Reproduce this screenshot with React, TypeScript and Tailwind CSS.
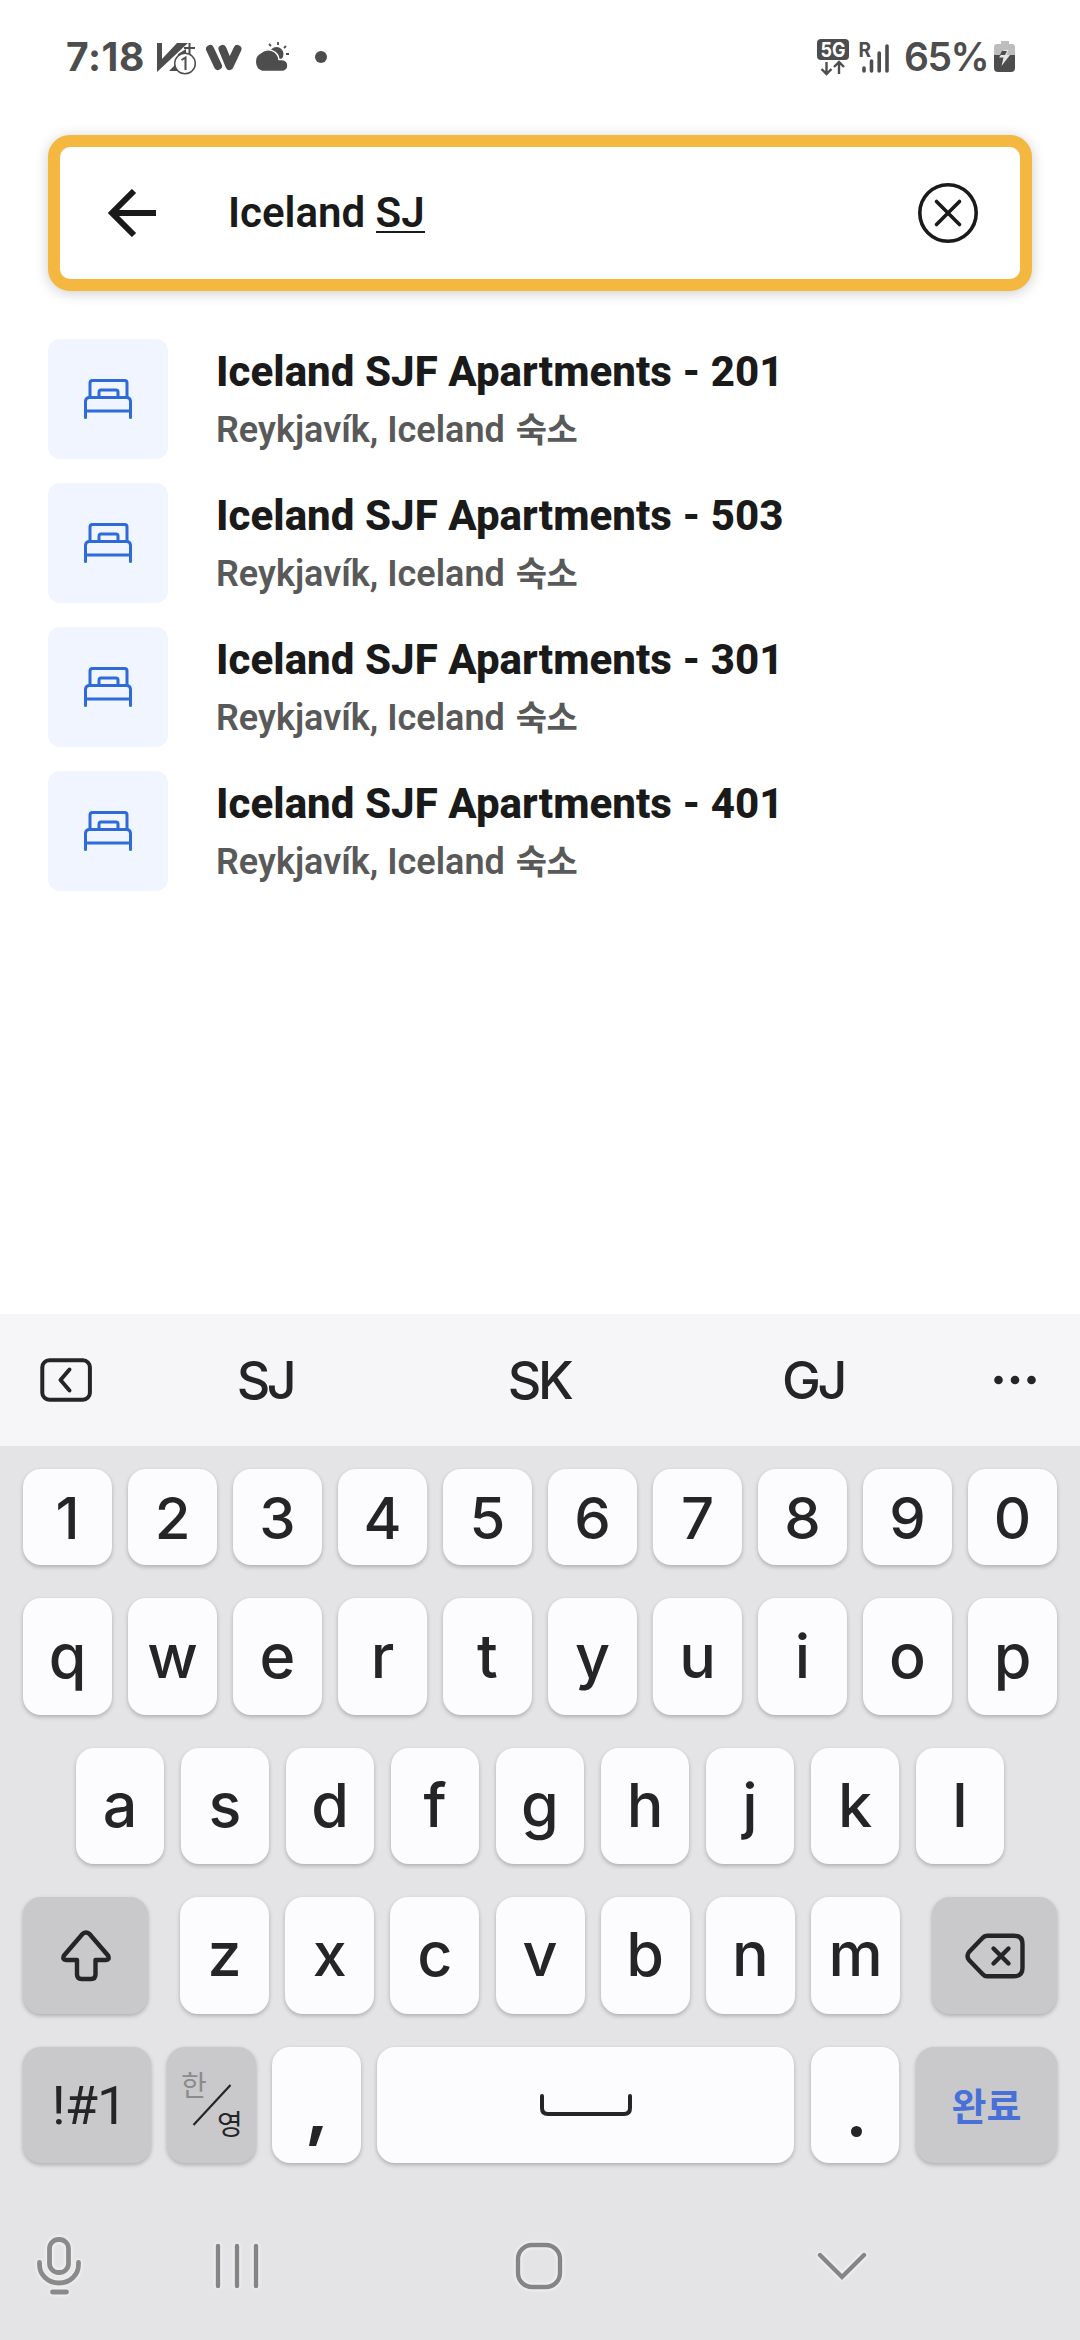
import React from "react";

const LATIN = 'font-["Inter","Noto_Sans_CJK_KR",sans-serif]';
const hotels = ["201", "503", "301", "401"];
const white = "bg-[#fcfcfe] text-[#252527]";
const grey = "bg-[#c9c9cb] text-[#252527]";
const keyBase =
  "flex shrink-0 items-center justify-center rounded-[18px] shadow-[0_2px_4px_rgba(0,0,0,0.24)]";

function Status() {
  return (
    <header className="flex h-[135px] items-start pt-[37px] pr-[64px] pl-[66px] text-[#4d4d4d]">
      <span className={`${LATIN} w-[91px] text-[39px] leading-[40px] font-bold tracking-[0.6px]`}>7:18</span>
      <svg className="h-[40px] w-[172px]" viewBox="157 37 172 40" fill="none">
        <path d="M157 43h5v16l15-16h11L157 72z" fill="#4d4d4d" />
        <path d="M169 71l10-10v10zM178 54l8-5v4l-8 4z" fill="#4d4d4d" />
        <path d="M184 48h11M189.500 43v12" stroke="#4d4d4d" strokeWidth="2" />
        <circle cx="185" cy="63.500" r="10.300" fill="#fff" stroke="#4d4d4d" strokeWidth="1.500" />
        <path d="M181.500 60l4-2.500V70" stroke="#4d4d4d" strokeWidth="2" />
        <path d="M210 49l8 17" stroke="#4d4d4d" strokeWidth="8" strokeLinecap="round" />
        <path d="M222 49l8 17" stroke="#fff" strokeWidth="10" strokeLinecap="round" />
        <path d="M222.500 49l7 17 8-17" stroke="#4d4d4d" strokeWidth="8" strokeLinecap="round" strokeLinejoin="round" />
        <path d="M269 51l-3-1M271 46l-2-2M278 45v-3M284 48l2-2M286 54h3" stroke="#4d4d4d" strokeWidth="1.800" />
        <circle cx="276.500" cy="54" r="7" fill="#4d4d4d" />
        <path d="M262 71.500a9 10 0 0 1-1-19 11 11 0 0 1 18 7h3a6 6 0 0 1 0 12z" fill="#4d4d4d" stroke="#fff" strokeWidth="1.500" />
        <circle cx="321" cy="57" r="6" fill="#4d4d4d" />
      </svg>
      <div className="flex-1" />
      <svg className="h-[44px] w-[74px]" viewBox="815 35 74 44" fill="none">
        <rect x="815" y="37" width="32" height="21" rx="4" fill="#4d4d4d" />
        <text x="831" y="55" textAnchor="middle" fontFamily="Inter" fontSize="20.500" fontWeight="700" fill="#fff" textLength="25" lengthAdjust="spacingAndGlyphs">5G</text>
        <path d="M824.500 60v11M819.500 67l5 5 5-5M837 72V60M832 65l5-5 5 5" stroke="#4d4d4d" strokeWidth="2.400" />
        <text x="856.500" y="55" fontFamily="Inter" fontSize="19.500" fontWeight="700" fill="#4d4d4d" textLength="12.500" lengthAdjust="spacingAndGlyphs">R</text>
        <path d="M862 66v3M869.500 59v10M877.200 51v18M885 44v25" stroke="#4d4d4d" strokeWidth="3.600" strokeLinecap="round" />
      </svg>
      <span className={`${LATIN} ml-[13px] w-[90px] text-[39px] leading-[40px] font-semibold tracking-[-1.5px]`}>65%</span>
      <svg className="h-[40px] w-[22px]" viewBox="993 37 22 40">
        <path d="M1000 41h8v3h3a3 3 0 0 1 3 3v8h-21v-8a3 3 0 0 1 3-3h4z" fill="#bdbdbd" />
        <path d="M993 55h21v13a4 4 0 0 1-4 4h-13a4 4 0 0 1-4-4z" fill="#4d4d4d" />
        <path d="M1003.500 50h4l-2 5h3.500l-8.500 11 2-8.500h-4.500z" fill="#e5e5e5" />
        <path d="M1001 51h5l-2 4h-5z" fill="#4d4d4d" />
      </svg>
    </header>
  );
}

function Search() {
  return (
    <div className="mx-[48px] flex h-[156px] items-center rounded-[22px] border-[12px] border-[#f4b840] bg-white pr-[42px] pl-[48px] shadow-[0_2px_14px_rgba(0,0,0,0.2)]">
      <svg className="size-[48px]" viewBox="0 0 48 48" fill="none" stroke="#1a1a1a" strokeWidth="6">
        <path d="M48 24H5M26 2L4 24l22 22" />
      </svg>
      <span className="ml-[72px] flex-1 font-[Roboto,sans-serif] text-[42px] leading-[50px] font-semibold text-[#1a1a1a]">
        Iceland <span className="inline-block h-[45px] border-b-[2px] border-[#1a1a1a] leading-[50px]">SJ</span>
      </span>
      <svg className="size-[60px]" viewBox="0 0 60 60" fill="none" stroke="#1a1a1a" strokeWidth="3.600" strokeLinecap="round">
        <circle cx="30" cy="30" r="28.200" />
        <path d="M18.500 18.500l23 23M41.500 18.500l-23 23" />
      </svg>
    </div>
  );
}

function Bed() {
  return (
    <svg className="size-[48px]" viewBox="0 0 48 48" fill="none" stroke="#2e6bd6" strokeWidth="3" strokeLinecap="round" strokeLinejoin="round">
      <path d="M6 22V8a2.500 2.500 0 0 1 2.500-2.500h32A2.500 2.500 0 0 1 43 8v14" />
      <path d="M15 22v-5a2 2 0 0 1 2-2h15a2 2 0 0 1 2 2v5" />
      <path d="M1.500 42.500V26a4 4 0 0 1 4-3.500h37a4 4 0 0 1 4 3.500v16.500M1.500 36h45" />
    </svg>
  );
}

function Key({ label, cls }: { label: string; cls: string }) {
  return <button className={`${keyBase} ${white} ${LATIN} ${cls}`}>{label}</button>;
}

function Keyboard() {
  return (
    <div className="flex flex-col bg-[#e4e4e6]">
      <div className={`${LATIN} flex h-[132px] items-center bg-[#f6f6f8] pr-[44px] pl-[40px] text-[52px] font-medium tracking-[-3.5px] text-[#252527]`}>
        <svg className="h-[44px] w-[52px]" viewBox="0 0 52 44" fill="none" stroke="#252527" strokeWidth="4" strokeLinecap="round" strokeLinejoin="round">
          <rect x="2.300" y="2.300" width="47.600" height="39.400" rx="7" />
          <path d="M29.500 11.500L20.500 22l9 10.500" />
        </svg>
        <span className="ml-[36px] w-[274px] pt-[2px] text-center">SJ</span>
        <span className="w-[274px] pt-[2px] text-center">SK</span>
        <span className="w-[274px] pt-[2px] text-center">GJ</span>
        <span className="flex-1" />
        <svg className="h-[10px] w-[42px]" viewBox="0 0 42 10" fill="#252527">
          <circle cx="4.500" cy="5" r="4.300" />
          <circle cx="21" cy="5" r="4.300" />
          <circle cx="37.500" cy="5" r="4.300" />
        </svg>
      </div>
      <div className="flex flex-col gap-[33px] px-[23px] pt-[23px]">
        <div className="flex gap-[16px]">
          {[..."1234567890"].map((k) => (
            <Key key={k} label={k} cls="h-[96px] w-[89px] pt-[2px] text-[58px] font-medium" />
          ))}
        </div>
        <div className="flex gap-[16px]">
          {[..."qwertyuiop"].map((k) => (
            <Key key={k} label={k} cls="h-[117px] w-[89px] text-[61px] font-medium" />
          ))}
        </div>
        <div className="flex gap-[17px] pl-[53px]">
          {[..."asdfghjkl"].map((k) => (
            <Key key={k} label={k} cls="h-[116px] w-[88px] pb-px text-[61px] font-medium" />
          ))}
        </div>
        <div className="flex justify-between">
          <button className={`${keyBase} ${grey} h-[117px] w-[125px]`}>
            <svg className="h-[52px] w-[50px]" viewBox="0 0 50 52" fill="none" stroke="#252527" strokeWidth="4.400" strokeLinejoin="round">
              <path d="M21.500 4Q25 1 28.500 4L47 25.500Q49 30 45 30H34.500V44.500Q34.500 49 30 49H20.500Q16 49 16 44.500V30H5Q1 30 3 25.500Z" />
            </svg>
          </button>
          <div className="flex gap-[16.200px]">
            {[..."zxcvbnm"].map((k) => (
              <Key key={k} label={k} cls="h-[117px] w-[89px] pb-px text-[61px] font-medium" />
            ))}
          </div>
          <button className={`${keyBase} ${grey} h-[117px] w-[125px]`}>
            <svg className="h-[46px] w-[60px]" viewBox="0 0 60 46" fill="none" stroke="#252527" strokeWidth="4.400" strokeLinecap="round" strokeLinejoin="round">
              <path d="M22 2.700H49Q57.500 2.700 57.500 11V35Q57.500 43.300 49 43.300H22Q19.500 43.300 17.500 41L4 27Q1 23 4 19L17.500 5Q19.500 2.700 22 2.700Z" />
              <path d="M28.500 15.500l15 15M43.500 15.500l-15 15" />
            </svg>
          </button>
        </div>
        <div className="flex gap-[16px]">
          <button className={`${keyBase} ${grey} h-[116px] w-[128px] pl-[4px] font-[Roboto,sans-serif] text-[54px] tracking-[-1px]`}>!#1</button>
          <button className={`${keyBase} ${grey} relative h-[116px] w-[89px] font-["Noto_Sans_CJK_KR",sans-serif] text-[28px]`}>
            <span className="absolute top-[17px] left-[14px] leading-[40px] text-[#8b8b8d]">한</span>
            <svg className="h-[42px] w-[40px]" viewBox="0 0 40 42" stroke="#252527" strokeWidth="2.200">
              <path d="M1.500 41L38.500 1" />
            </svg>
            <span className="absolute top-[56px] left-[50px] leading-[40px]">영</span>
          </button>
          <button className={`${keyBase} ${white} h-[116px] w-[89px] pt-[62px] pr-[2px]`}>
            <svg className="h-[20px] w-[14px]" viewBox="0 0 14 20" fill="#252527"><path d="M4 0h10L7 20H0z" /></svg>
          </button>
          <button className={`${keyBase} ${white} h-[116px] w-[417px]`}>
            <svg className="h-[22px] w-[92px]" viewBox="0 0 92 22" fill="none" stroke="#252527" strokeWidth="4" strokeLinecap="round">
              <path d="M2 2v12q0 6 6 6h76q6 0 6-6V2" />
            </svg>
          </button>
          <button className={`${keyBase} ${white} ml-px h-[116px] w-[88px] pt-[52px] pl-[3px]`}>
            <span className="size-[11px] rounded-full bg-[#252527]" />
          </button>
          <button className={`${keyBase} ml-px h-[116px] w-[141px] bg-[#c9c9cb] pb-[4px] font-["Noto_Sans_CJK_KR",sans-serif] text-[38px] font-bold text-[#4870d6]`}>
            완료
          </button>
        </div>
      </div>
      <nav className="flex h-[177px] items-center pt-[29px] pl-[35px]">
        <svg className="h-[64px] w-[48px] drop-shadow-[0_0_2px_#fff]" viewBox="0 0 48 64" fill="none" stroke="#8a8a8b" strokeWidth="4.800" strokeLinecap="round">
          <rect x="14.500" y="5.500" width="19" height="33" rx="9" />
          <path d="M4.500 28.500v2c0 10 8 18.500 19.500 18.500s19.500-8.500 19.500-18.500v-2M17.500 58h14" />
        </svg>
        <svg className="ml-[131px] h-[50px] w-[46px] drop-shadow-[0_0_2px_#fff]" viewBox="0 0 46 50" stroke="#858586" strokeWidth="4.400" strokeLinecap="round">
          <path d="M4 5v40M23 5v40M42 5v40" />
        </svg>
        <svg className="ml-[254px] h-[50px] w-[50px] drop-shadow-[0_0_2px_#fff]" viewBox="0 0 50 50" fill="none" stroke="#858586" strokeWidth="4.400">
          <rect x="4" y="4" width="42" height="42" rx="14" />
        </svg>
        <svg className="ml-[253px] h-[30px] w-[50px] drop-shadow-[0_0_2px_#fff]" viewBox="0 0 50 30" fill="none" stroke="#858586" strokeWidth="4.400" strokeLinecap="round">
          <path d="M3 4l22 22L47 4" />
        </svg>
      </nav>
    </div>
  );
}

export default function App() {
  return (
    <main className="flex h-[2340px] w-[1080px] flex-col overflow-hidden bg-white">
      <Status />
      <Search />
      <ul className="mt-[48px] flex flex-1 flex-col gap-[24px] px-[48px]">
        {hotels.map((n) => (
          <li key={n} className="flex h-[120px] gap-[48px]">
            <div className="flex size-[120px] items-center justify-center rounded-[12px] bg-[#f0f5ff]">
              <Bed />
            </div>
            <div className='pt-[8px] font-["Roboto","Noto_Sans_CJK_KR",sans-serif]'>
              <div className="h-[59px] text-[42px] leading-[50px] font-extrabold tracking-[0.05px] text-[#1a1a1a]">Iceland SJF Apartments - {n}</div>
              <div className="text-[36px] leading-[48px] font-semibold text-[#595959]">
                Reykjavík, Iceland <span className="ml-[2px] text-[34px] font-bold tracking-[-0.5px]">숙소</span>
              </div>
            </div>
          </li>
        ))}
      </ul>
      <Keyboard />
    </main>
  );
}
